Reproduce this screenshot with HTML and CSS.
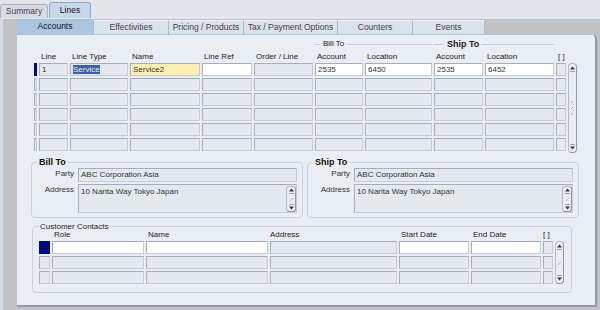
FILE: index.html
```html
<!DOCTYPE html>
<html lang="en">
<head>
  <meta charset="UTF-8" />
  <meta name="viewport" content="width=device-width, initial-scale=1.0"/>
  <title>Lines</title>
  <link rel="stylesheet" href="styles.css">
</head>
<body>
  <!-- top level tabs -->
  <div class="top-tabs">
    <div class="top-tab">Summary</div>
    <div class="top-tab current">Lines</div>
  </div>

  <div class="frame">
    <div class="sheet">
      <div class="sub-tabs">
        <div class="sub-tab current">Accounts</div>
        <div class="sub-tab">Effectivities</div>
        <div class="sub-tab">Pricing / Products</div>
        <div class="sub-tab wide">Tax / Payment Options</div>
        <div class="sub-tab">Counters</div>
        <div class="sub-tab last">Events</div>
      </div>

      <div class="panel">
        <!-- lines block -->
        <div class="lines-grid">
          <div class="span-a"></div>
          <div class="grp bill">Bill To</div>
          <div class="grp ship">Ship To</div>
          <div class="span-b"></div>

          <div></div>
          <div class="hd">Line</div>
          <div class="hd">Line Type</div>
          <div class="hd">Name</div>
          <div class="hd">Line Ref</div>
          <div class="hd">Order / Line</div>
          <div class="hd">Account</div>
          <div class="hd">Location</div>
          <div class="hd">Account</div>
          <div class="hd">Location</div>
          <div class="hd">[ ]</div>
          <div></div>

          <div class="ind on"></div>
          <div class="f">1</div>
          <div class="f"><span class="sel">Service</span></div>
          <div class="f req">Service2</div>
          <div class="f white"></div>
          <div class="f"></div>
          <div class="f white">2535</div>
          <div class="f white">6450</div>
          <div class="f white">2535</div>
          <div class="f white">6452</div>
          <div class="f"></div>

          <div class="ind"></div><div class="f"></div><div class="f"></div><div class="f"></div><div class="f"></div><div class="f"></div><div class="f"></div><div class="f"></div><div class="f"></div><div class="f"></div><div class="f"></div>
          <div class="ind"></div><div class="f"></div><div class="f"></div><div class="f"></div><div class="f"></div><div class="f"></div><div class="f"></div><div class="f"></div><div class="f"></div><div class="f"></div><div class="f"></div>
          <div class="ind"></div><div class="f"></div><div class="f"></div><div class="f"></div><div class="f"></div><div class="f"></div><div class="f"></div><div class="f"></div><div class="f"></div><div class="f"></div><div class="f"></div>
          <div class="ind"></div><div class="f"></div><div class="f"></div><div class="f"></div><div class="f"></div><div class="f"></div><div class="f"></div><div class="f"></div><div class="f"></div><div class="f"></div><div class="f"></div>
          <div class="ind"></div><div class="f"></div><div class="f"></div><div class="f"></div><div class="f"></div><div class="f"></div><div class="f"></div><div class="f"></div><div class="f"></div><div class="f"></div><div class="f"></div>

          <div class="vscroll lines-scroll">
            <svg width="7" height="6" viewBox="0 0 7 6"><path d="M3.5 0.5 L6 3.5 H1 Z" fill="#3a3a3a"/><path d="M1 5.5 H6" stroke="#9aa4b0"/></svg>
            <svg width="7" height="18" viewBox="0 0 7 18"><path d="M2 4 L4 2 M2 10 L4 8 M2 16 L4 14 M4 6 L5 5 M4 12 L5 11" stroke="#a9b3bf"/></svg>
            <svg width="7" height="6" viewBox="0 0 7 6"><path d="M1 0.5 H6" stroke="#9aa4b0"/><path d="M1 2.5 H6 L3.5 5.5 Z" fill="#3a3a3a"/></svg>
          </div>
        </div>

        <!-- bill to / ship to -->
        <div class="parties">
          <fieldset class="box">
            <legend class="bold">Bill To</legend>
            <div class="form">
              <label>Party</label>
              <div class="f tall">ABC Corporation Asia</div>
              <label>Address</label>
              <div class="f area">
                <span>10 Narita Way Tokyo Japan</span>
                <div class="vscroll mini">
                  <svg width="7" height="6" viewBox="0 0 7 6"><path d="M3.5 0.5 L6 3.5 H1 Z" fill="#3a3a3a"/><path d="M1 5.5 H6" stroke="#9aa4b0"/></svg>
                  <svg width="7" height="5" viewBox="0 0 7 5"><path d="M2 4 L5 1" stroke="#b3bcc7"/></svg>
                  <svg width="7" height="6" viewBox="0 0 7 6"><path d="M1 0.5 H6" stroke="#9aa4b0"/><path d="M1 2.5 H6 L3.5 5.5 Z" fill="#3a3a3a"/></svg>
                </div>
              </div>
            </div>
          </fieldset>

          <fieldset class="box">
            <legend class="bold">Ship To</legend>
            <div class="form">
              <label>Party</label>
              <div class="f tall">ABC Corporation Asia</div>
              <label>Address</label>
              <div class="f area">
                <span>10 Narita Way Tokyo Japan</span>
                <div class="vscroll mini">
                  <svg width="7" height="6" viewBox="0 0 7 6"><path d="M3.5 0.5 L6 3.5 H1 Z" fill="#3a3a3a"/><path d="M1 5.5 H6" stroke="#9aa4b0"/></svg>
                  <svg width="7" height="5" viewBox="0 0 7 5"><path d="M2 4 L5 1" stroke="#b3bcc7"/></svg>
                  <svg width="7" height="6" viewBox="0 0 7 6"><path d="M1 0.5 H6" stroke="#9aa4b0"/><path d="M1 2.5 H6 L3.5 5.5 Z" fill="#3a3a3a"/></svg>
                </div>
              </div>
            </div>
          </fieldset>
        </div>

        <!-- customer contacts -->
        <fieldset class="box contacts">
          <legend>Customer Contacts</legend>
          <div class="contacts-grid">
            <div></div>
            <div class="hd">Role</div>
            <div class="hd">Name</div>
            <div class="hd flush">Address</div>
            <div class="hd">Start Date</div>
            <div class="hd">End Date</div>
            <div class="hd flush">[ ]</div>
            <div></div>

            <div class="ind on"></div>
            <div class="f white"></div>
            <div class="f white"></div>
            <div class="f"></div>
            <div class="f white"></div>
            <div class="f white"></div>
            <div class="f"></div>

            <div class="ind"></div><div class="f"></div><div class="f"></div><div class="f"></div><div class="f"></div><div class="f"></div><div class="f"></div>
            <div class="ind"></div><div class="f"></div><div class="f"></div><div class="f"></div><div class="f"></div><div class="f"></div><div class="f"></div>

            <div class="vscroll contacts-scroll">
              <svg width="7" height="6" viewBox="0 0 7 6"><path d="M3.5 0.5 L6 3.5 H1 Z" fill="#3a3a3a"/><path d="M1 5.5 H6" stroke="#9aa4b0"/></svg>
              <svg width="7" height="6" viewBox="0 0 7 6"><path d="M2 5 L5 2" stroke="#b3bcc7"/></svg>
              <svg width="7" height="6" viewBox="0 0 7 6"><path d="M1 0.5 H6" stroke="#9aa4b0"/><path d="M1 2.5 H6 L3.5 5.5 Z" fill="#3a3a3a"/></svg>
            </div>
          </div>
        </fieldset>
      </div>
    </div>
  </div>
</body>
</html>
```

FILE: styles.css
```css
* {
  box-sizing: border-box;
}

body {
  margin: 0;
  width: 600px;
  height: 310px;
  overflow: hidden;
  background: #e3e7ed;
  font-family: "Liberation Sans", Arial, sans-serif;
  font-size: 8px;
  color: #222;
}

/* top tabs */
.top-tabs {
  display: flex;
  align-items: flex-end;
  gap: 1px;
  height: 18px;
}

.top-tab {
  width: 48px;
  height: 14px;
  line-height: 13px;
  text-align: center;
  font-size: 8.5px;
  color: #444;
  background: #d6dce5;
  border: 1px solid #aab4c2;
  border-bottom: none;
  border-radius: 3px 3px 0 0;
}

.top-tab.current {
  width: 42px;
  height: 16px;
  line-height: 15px;
  color: #111;
  background: #c6d8eb;
  border-color: #93a8c2;
}

/* grey frame around the sheet */
.frame {
  height: 292px;
  background: #c2c2c2;
  border-top: 1px solid #dfe6ee;
  border-left: 3px solid #d3dbe5;
  padding: 0 3px 0 14px;
}

.sheet {
  width: 580px;
}

.sub-tabs {
  display: flex;
  height: 15px;
}

.sub-tab {
  width: 75px;
  height: 14px;
  margin-top: 1px;
  line-height: 13px;
  text-align: center;
  font-size: 8.5px;
  color: #444;
  background: #dae2ec;
  border-top: 1px solid #eef2f7;
  border-left: 1px solid #aebbcb;
}

.sub-tab.current {
  width: 76px;
  height: 15px;
  margin-top: 0;
  line-height: 15px;
  color: #111;
  background: #abc5df;
  border: none;
  border-radius: 4px 4px 0 0;
}

.sub-tab.wide {
  width: 94px;
}

.sub-tab.last {
  width: 73px;
  border-right: 1px solid #aebbcb;
}

.panel {
  background: #e9eef5;
  border-top: 1px solid #b7c4d3;
  border-right: 2px solid #8d99a8;
  border-bottom: 2px solid #8d99a8;
  border-top-right-radius: 5px;
  padding: 5px 0 12px 14px;
}

/* fields */
.f {
  height: 13px;
  padding: 0 2px;
  line-height: 11px;
  color: #333;
  white-space: nowrap;
  overflow: hidden;
  background: #e4e9f0;
  border: 1px solid #c3ccd7;
  border-top-color: #a4afbd;
  border-left-color: #a4afbd;
}

.f.white {
  background: #fff;
}

.f.req {
  background: #fdefb2;
}

.sel {
  background: #3f5f9f;
  color: #e8eef7;
}

.ind {
  background: #e4e9f0;
  border: 1px solid #c3ccd7;
  border-top-color: #a4afbd;
  border-left-color: #a4afbd;
}

.ind.on {
  background: #000a80;
  border-color: #000a80;
}

.hd {
  align-self: end;
  padding-left: 2px;
  line-height: 9px;
  color: #222;
  white-space: nowrap;
}

.hd.flush {
  padding-left: 0;
}

/* lines grid */
.lines-grid {
  display: grid;
  grid-template-columns: 3px 29px 58px 70px 50px 59px 48px 67px 49px 69px 10px 9px;
  grid-template-rows: 8px 11px repeat(6, 13px);
  gap: 2px;
  margin-left: 3px;
}

.span-a {
  grid-column: 1 / 7;
}

.span-b {
  grid-column: 11 / 13;
}

.grp {
  grid-column: span 2;
  display: flex;
  align-items: center;
  gap: 3px;
  line-height: 8px;
  white-space: nowrap;
}

.grp::before,
.grp::after {
  content: "";
  height: 1px;
  background: #c5ceda;
}

.grp::after {
  flex: 1;
}

.grp.bill::before {
  width: 5px;
}

.grp.ship {
  font-weight: bold;
  font-size: 9px;
}

.grp.ship::before {
  width: 10px;
}

.vscroll {
  display: flex;
  flex-direction: column;
  justify-content: space-between;
  align-items: center;
  padding: 2px 0;
  background: #e8edf3;
  border: 1px solid #b1bcc9;
  border-right-color: #8e9aa8;
  border-bottom-color: #8e9aa8;
  border-radius: 4px;
}

.lines-scroll {
  grid-column: 12;
  grid-row: 3 / span 6;
  height: 90px;
}

/* bill to / ship to */
.parties {
  display: flex;
  gap: 4px;
  margin-top: 6px;
}

.box {
  margin: 0;
  padding: 1px 5px 4px 0;
  border: 1px solid #c8d2de;
  border-radius: 4px;
  min-width: 0;
}

.box legend {
  margin-left: 5px;
  padding: 0 2px;
  line-height: 10px;
}

.bold {
  font-weight: bold;
  font-size: 9px;
  color: #111;
}

.parties .box {
  width: 272px;
}

.form {
  display: grid;
  grid-template-columns: 42px 219px;
  row-gap: 2px;
  column-gap: 4px;
}

.form label {
  text-align: right;
  line-height: 12px;
  color: #333;
}

.f.tall {
  height: 14px;
  line-height: 12px;
}

.f.area {
  height: 29px;
  display: flex;
  justify-content: space-between;
  align-items: flex-start;
  padding: 1px 0 1px 2px;
  line-height: 11px;
}

.vscroll.mini {
  width: 10px;
  height: 26px;
  padding: 1px 0;
  border-radius: 3px;
}

/* customer contacts */
.contacts {
  width: 540px;
  margin: 4px 0 0 1px;
  padding: 0 7px 8px 6px;
}

.contacts legend {
  margin-left: 0;
  padding: 0 1px;
  line-height: 9px;
  color: #222;
}

.contacts-grid {
  display: grid;
  grid-template-columns: 11px 92px 122px 127px 70px 70px 10px 9px;
  grid-template-rows: 8px repeat(3, 13px);
  gap: 2px;
}

.contacts-scroll {
  grid-column: 8;
  grid-row: 2 / span 3;
}
```
